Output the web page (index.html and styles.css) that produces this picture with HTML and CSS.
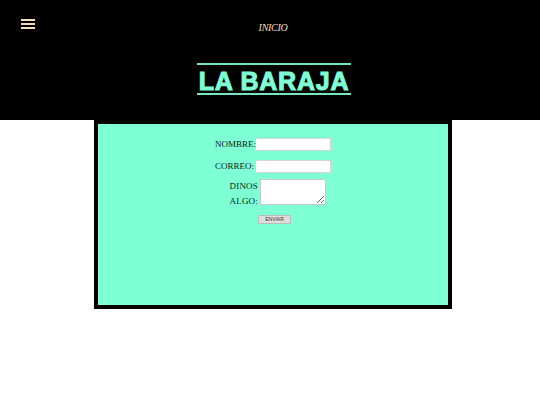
FILE: index.html
```html
<!DOCTYPE html>
<html lang="es">
<head>
<meta charset="utf-8">
<title>La Baraja</title>
<link rel="stylesheet" href="styles.css">
</head>
<body>
<header class="site-header">
  <div class="top-row">
    <button class="menu-btn" type="button" aria-label="Menú">
      <svg width="14" height="12" viewBox="0 0 14 12"><path d="M0 2h14M0 6h14M0 10h14" stroke="#f3dfb4" stroke-width="1.8" fill="none"/></svg>
    </button>
    <nav class="nav"><a href="#">INICIO</a></nav>
  </div>
  <h1 class="logo">LA BARAJA</h1>
</header>
<main class="panel">
  <form class="contact">
    <div class="row"><label>NOMBRE:</label><input type="text" class="field"></div>
    <div class="row second"><label>CORREO:</label><input type="text" class="field"></div>
    <div class="row message"><label class="stack">DINOS<br>ALGO:</label><textarea class="area"></textarea></div>
    <div class="row send"><button type="button" class="submit">ENVIAR</button></div>
  </form>
</main>
</body>
</html>
```
FILE: styles.css
```css
html, body { margin: 0; padding: 0; background: #fff; }
body { height: 405px; overflow: hidden; font-family: "Liberation Serif", serif; }
.site-header { background: #000; height: 120px; display: flex; flex-direction: column; align-items: center; }
.top-row { width: 100%; height: 63px; display: flex; justify-content: center; position: relative; }
.menu-btn { position: absolute; left: 21px; top: 18px; padding: 0; border: 0; background: none; line-height: 0; }
.nav { margin-top: 21px; margin-left: 6px; line-height: 13px; height: 13px; }
.nav a { display: block; color: #f3dfb4; font: italic 10px/13px "Liberation Serif", serif; text-decoration: none; letter-spacing: -0.3px; }
.logo { margin: 0 0 0 8px; width: 154px; height: 28px; border-top: 2px solid #76e6c0; border-bottom: 2px solid #76e6c0; color: #7fffd4; font: 700 25px/33px "Liberation Sans", sans-serif; text-align: center; white-space: nowrap; letter-spacing: 0.8px; -webkit-text-stroke: 1px #7fffd4; box-sizing: content-box; }
.panel { width: 350px; height: 181px; margin-left: 94px; background: #7fffd4; border: 4px solid #000; }
.contact { display: flex; flex-direction: column; align-items: flex-start; padding-top: 14px; margin-left: 117px; font-size: 9px; color: #04211a; }
.row { display: flex; align-items: center; height: 13px; margin-bottom: 9px; }
.second { margin-bottom: 6px; }
.row label { flex: none; width: 39px; padding-right: 1px; text-align: right; white-space: nowrap; line-height: 12px; position: relative; top: -1px; }
.field { box-sizing: border-box; flex: none; width: 76px; height: 13px; border: 1px solid #d4d4d4; background: #fff; padding: 0; margin: 0; }
.message { height: 26px; margin-bottom: 10px; }
.row .stack { width: 43px; padding-right: 1px; line-height: 15px; top: 0; padding-top: 3px; letter-spacing: 0.2px; }
.area { box-sizing: border-box; flex: none; margin: 0 0 0 1px; width: 66px; height: 26px; border: 1px solid #c8c8c8; background: #fff; padding: 0; }
.send { height: 9px; margin: 0; }
.submit { margin-left: 43px; box-sizing: border-box; width: 33px; height: 9px; padding: 0; font: 5px/7px "Liberation Sans", sans-serif; color: #333; background: #ddd; border: 1px solid #bbb; border-radius: 1px; }
```
